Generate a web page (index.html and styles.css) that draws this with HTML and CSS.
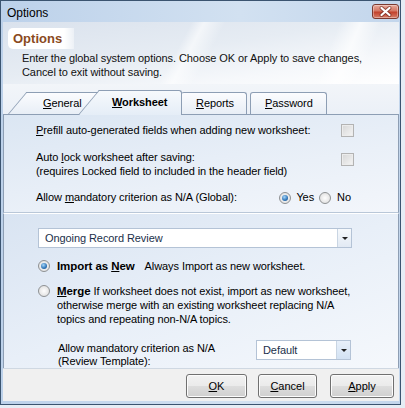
FILE: index.html
```html
<!DOCTYPE html>
<html lang="en">

<head>
    <meta charset="UTF-8">
    <title>Options</title>
    <link rel="stylesheet" href="styles.css">
</head>

<body>
    <div class="window">
        <!-- Title bar -->
        <div class="titlebar">
            <span class="title">Options</span>
            <div class="close">
                <svg width="27" height="15" viewBox="0 0 27 15">
                    <path d="M9.5 4 L17.5 11 M17.5 4 L9.5 11" stroke="#5e1e16" stroke-width="4" stroke-linecap="round" opacity="0.6" />
                    <path d="M9.5 4 L17.5 11 M17.5 4 L9.5 11" stroke="#fff" stroke-width="2.2" stroke-linecap="round" />
                </svg>
            </div>
        </div>

        <div class="client">
            <!-- Banner -->
            <div class="banner">
                <div class="banner-title">Options</div>
                <p class="banner-text">Enter the global system options. Choose OK or Apply to save changes,<br>Cancel to exit without saving.</p>
            </div>

            <!-- Tabs -->
            <div class="tabs">
                <div class="tab tab-general"><span><u>G</u>eneral</span></div>
                <div class="tab tab-active"><span><u>W</u>orksheet</span></div>
                <div class="tab tab-reports"><span><u>R</u>eports</span></div>
                <div class="tab tab-password"><span><u>P</u>assword</span></div>
            </div>

            <div class="page">
                <div class="option-row row-prefill">
                    <span class="label"><u>P</u>refill auto-generated fields when adding new worksheet:</span>
                    <span class="check"></span>
                </div>
                <div class="option-row row-lock">
                    <span class="label">Auto <u>l</u>ock worksheet after saving:<br>(requires Locked field to included in the header field)</span>
                    <span class="check"></span>
                </div>
                <div class="option-row row-na">
                    <span class="label">Allow <u>m</u>andatory criterion as N/A (Global):</span>
                    <span class="radios">
                        <span class="radio on"></span><span class="radio-text">Yes</span>
                        <span class="radio"></span><span class="radio-text">No</span>
                    </span>
                </div>
            </div>

            <!-- Import options -->
            <div class="import">
                <div class="combo combo-review">
                    <span class="combo-value">Ongoing Record Review</span>
                    <span class="combo-btn"></span>
                </div>
                <div class="choice choice-new">
                    <span class="radio on"></span>
                    <div class="choice-text"><b>Import as <u>N</u>ew</b><span class="gap"></span>Always Import as new worksheet.</div>
                </div>
                <div class="choice choice-merge">
                    <span class="radio"></span>
                    <div class="choice-text"><b><u>M</u>erge</b> If worksheet does not exist, import as new worksheet,<br>otherwise merge with an existing worksheet replacing N/A<br>topics and repeating non-N/A topics.</div>
                </div>
                <div class="template-row">
                    <span class="template-label">Allow mandatory criterion as N/A<br>(Review Template):</span>
                    <div class="combo combo-default">
                        <span class="combo-value">Default</span>
                        <span class="combo-btn"></span>
                    </div>
                </div>
            </div>

            <!-- Buttons -->
            <div class="footer">
                <button class="btn btn-ok"><u>O</u>K</button>
                <button class="btn btn-cancel"><u>C</u>ancel</button>
                <button class="btn btn-apply"><u>A</u>pply</button>
            </div>
        </div>
    </div>
</body>

</html>
```

FILE: styles.css
```css
* {
    box-sizing: border-box;
}

body {
    margin: 0;
    background-color: #e6edf5;
    font-family: "Liberation Sans", Arial, sans-serif;
    font-size: 11px;
    letter-spacing: -0.08px;
    color: #000;
}

u {
    text-decoration: underline;
    text-underline-offset: 1px;
}

.window {
    width: 401px;
    height: 405px;
    border: 1px solid #3b5470;
    padding: 0 1px 3px 2px;
    display: flex;
    flex-direction: column;
    background: linear-gradient(to right, #bcd1ea, #d2e1f1 60%, #c3d6ec);
}

/* Title bar */
.titlebar {
    height: 21px;
    display: flex;
    justify-content: space-between;
    align-items: flex-start;
}

.title {
    font-size: 12px;
    line-height: 20px;
    padding: 2px 0 0 4px;
    letter-spacing: 0;
    color: #000;
}

.close {
    width: 27px;
    height: 15px;
    margin-top: 3px;
    border: 1px solid #7b3a30;
    border-radius: 3px;
    background: linear-gradient(#e9a99b, #d47764 45%, #c2412c 55%, #d77e69);
    box-shadow: inset 0 0 0 1px rgba(255, 255, 255, 0.35);
}

.close svg {
    display: block;
    margin: -1px 0 0 -1px;
}

.client {
    flex: 1;
    display: flex;
    flex-direction: column;
    background-color: #eef3f9;
}

/* Banner */
.banner {
    height: 62px;
    padding: 6px 0 0 5px;
    background:
        linear-gradient(118deg, transparent 0 44%, rgba(255, 255, 255, 0.6) 47%, transparent 52%),
        linear-gradient(112deg, transparent 0 80%, rgba(255, 255, 255, 0.7) 85%, transparent 90%),
        linear-gradient(to bottom right, #dae2ed 0%, #e6ecf3 45%, #f6f8fb 75%, #ffffff 100%);
}

.banner-title {
    width: 66px;
    height: 21px;
    line-height: 21px;
    padding-left: 5px;
    border-radius: 5px 0 0 5px;
    font-size: 13px;
    font-weight: bold;
    letter-spacing: 0;
    color: #8a4a1d;
    background: linear-gradient(to right, #ffffff 85%, rgba(255, 255, 255, 0.4));
}

.banner-text {
    margin: 2px 0 0 14px;
    line-height: 14px;
    color: #111;
}

/* Tabs */
.tabs {
    height: 31px;
    margin-bottom: -1px;
    padding-left: 5px;
    display: flex;
    align-items: flex-end;
    background: linear-gradient(#f2f5f9, #ebf0f7);
}

.tab {
    position: relative;
    z-index: 1;
    height: 22px;
    margin-bottom: 1px;
    line-height: 22px;
    white-space: nowrap;
}

.tab-general {
    width: 90px;
    padding-left: 35px;
}

.tab-general::before {
    content: "";
    position: absolute;
    inset: 0;
    z-index: -1;
    border: 1px solid #8d9eb4;
    border-bottom: none;
    background: linear-gradient(#fbfcfe, #e8eef6);
    transform: skewX(-40deg);
    transform-origin: bottom left;
}

.tab-active {
    z-index: 3;
    width: 104px;
    height: 25px;
    margin: 0 0 0 -20px;
    padding: 1px 0 0 34px;
    line-height: 23px;
    font-weight: bold;
}

.tab-active::before {
    content: "";
    position: absolute;
    left: 0;
    top: 0;
    bottom: 0;
    width: 40px;
    z-index: -1;
    border-left: 1px solid #8d9eb4;
    border-top: 1px solid #8d9eb4;
    background: linear-gradient(#f6f9fc, #e5edf7);
    transform: skewX(-40deg);
    transform-origin: bottom left;
}

.tab-active::after {
    content: "";
    position: absolute;
    left: 22px;
    right: 0;
    top: 0;
    bottom: 0;
    z-index: -1;
    border-top: 1px solid #8d9eb4;
    border-right: 1px solid #8d9eb4;
    border-radius: 0 3px 0 0;
    background: linear-gradient(#f6f9fc, #e5edf7);
}

.tab-reports,
.tab-password {
    border: 1px solid #8d9eb4;
    border-bottom: none;
    border-radius: 3px 3px 0 0;
    background: linear-gradient(#fbfcfe, #e8eef6);
    line-height: 20px;
}

.tab-reports {
    width: 66px;
    margin-left: -1px;
    padding-left: 15px;
    border-left: none;
}

.tab-password {
    width: 77px;
    margin-left: 3px;
    padding-left: 14px;
}

/* Tab page */
.page {
    height: 99px;
    border: 1px solid #8d9eb4;
    border-bottom-color: #b9c7d8;
    padding: 8px 44px 0 32px;
    background: linear-gradient(170deg, #dbe6f3, #eaf0f8 60%, #f3f6fb);
}

.option-row {
    display: flex;
    justify-content: space-between;
    align-items: flex-start;
    line-height: 14px;
}

.row-lock {
    margin-top: 13px;
}

.row-na {
    margin-top: 12px;
}

.check {
    width: 13px;
    height: 13px;
    border: 1px solid #b3b3b3;
    background: linear-gradient(135deg, #d6d6d6, #f5f5f5);
    box-shadow: inset 0 0 0 1px #ececec;
}

.row-prefill .check {
    margin-top: 1px;
}

.row-lock .check {
    margin-top: 3px;
}

.radios {
    display: flex;
    align-items: center;
    margin-right: 3px;
}

.radio {
    position: relative;
    width: 12px;
    height: 12px;
    flex: none;
    border: 1px solid #8e9193;
    border-radius: 50%;
    background: radial-gradient(circle at 50% 50%, #fefefe, #d9d9d9);
}

.radio.on::after {
    content: "";
    position: absolute;
    left: 2px;
    top: 2px;
    width: 6px;
    height: 6px;
    border-radius: 50%;
    background: radial-gradient(circle at 40% 35%, #a6d7fa, #2f74b6 60%, #1a4f85);
}

.radios .radio {
    margin-top: 1px;
}

.radio-text {
    margin: 0 5px 0 5px;
}

.radio-text:last-child {
    margin-right: 0;
    margin-left: 6px;
}

/* Import section */
.import {
    height: 155px;
    border: 1px solid #8d9eb4;
    border-top: 1px solid #ffffff;
    border-bottom: none;
    padding: 14px 0 0 34px;
    background: linear-gradient(160deg, #d9e4f2, #e8eff8 50%, #f5f8fc);
}

.combo {
    display: flex;
    height: 20px;
    border: 1px solid #b4c3d6;
    background-color: #fff;
}

.combo-review {
    width: 314px;
}

.combo-value {
    flex: 1;
    line-height: 18px;
    padding-left: 6px;
    color: #1b2f4a;
}

.combo-btn {
    position: relative;
    width: 14px;
    border-left: 1px solid #c9d5e3;
    background: linear-gradient(#f6f9fc, #e2eaf4);
}

.combo-btn::after {
    content: "";
    position: absolute;
    left: 4px;
    top: 8px;
    border-left: 3px solid transparent;
    border-right: 3px solid transparent;
    border-top: 3px solid #222;
}

.choice {
    display: flex;
    align-items: flex-start;
    margin-top: 11px;
    line-height: 14px;
}

.choice .radio {
    margin-top: 1px;
}

.choice-text {
    margin-left: 7px;
}

.choice-text b {
    font-size: 11.5px;
}

.gap {
    display: inline-block;
    width: 10px;
}

.template-row {
    display: flex;
    align-items: flex-start;
    margin: 16px 0 0 20px;
}

.template-label {
    width: 198px;
    line-height: 13px;
}

.combo-default {
    width: 95px;
    margin-top: -2px;
}

.combo-default .combo-btn {
    background: linear-gradient(#e8f0fa, #d3e2f3);
}

/* Footer */
.footer {
    height: 33px;
    border-top: 1px solid #cfd8e2;
    padding: 5px 5px 0 0;
    display: flex;
    justify-content: flex-end;
    align-items: flex-start;
    background-color: #f0f0f0;
}

.btn {
    height: 24px;
    padding: 0;
    border: 1px solid #707070;
    border-radius: 3px;
    font-family: "Liberation Sans", Arial, sans-serif;
    font-size: 11px;
    color: #000;
    background: linear-gradient(#f2f2f2, #ebebeb 48%, #dddddd 52%, #cfcfcf);
    box-shadow: inset 0 0 0 1px #fcfcfc;
}

.btn-ok {
    width: 61px;
}

.btn-cancel {
    width: 59px;
    margin-left: 11px;
}

.btn-apply {
    width: 64px;
    margin-left: 13px;
}
```
